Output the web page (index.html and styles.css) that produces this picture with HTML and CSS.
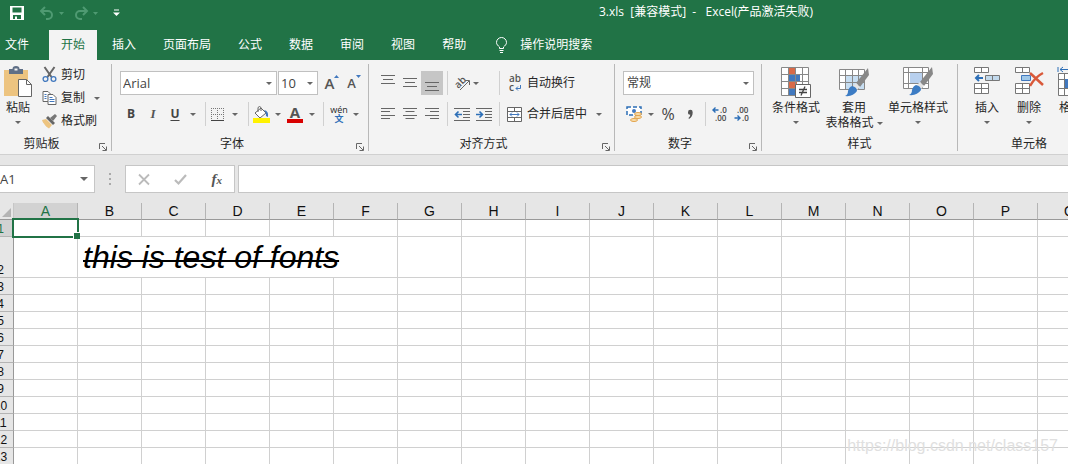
FILE: index.html
```html
<!DOCTYPE html>
<html lang="zh-CN">
<head>
<meta charset="utf-8">
<title>3.xls - Excel</title>
<link rel="stylesheet" href="styles.css">
</head>
<body>
<header class="titlebar">
  <div class="quick">
    <button class="plain save" aria-label="保存"><svg width="14" height="14" viewBox="0 0 14 14"><path d="M0 0h14v14H0z" fill="#fff"/><path d="M2.500 1.500h9v5h-9zM3 9h8v4H3z" fill="#217346"/><path d="M5 10.500h2V14H5z" fill="#fff"/></svg></button>
    <button class="plain dim undo" aria-label="撤消"><svg width="26" height="14" viewBox="0 0 26 14"><path d="M6 1L2 5l4 4M2 5h7a4 4 0 0 1 0 8H7" fill="none" stroke="#4f9a72" stroke-width="2"/><path d="M20 6h5l-2.500 3z" fill="#4f9a72"/></svg></button>
    <button class="plain dim redo" aria-label="恢复"><svg width="26" height="14" viewBox="0 0 26 14"><path d="M10 1l4 4-4 4M14 5H7a4 4 0 0 0 0 8h2" fill="none" stroke="#4f9a72" stroke-width="2"/><path d="M20 6h5l-2.500 3z" fill="#4f9a72"/></svg></button>
    <button class="plain" aria-label="自定义快速访问工具栏"><svg width="7" height="8" viewBox="0 0 7 8"><path d="M1 1h5" stroke="#fff"/><path d="M0 3.500h7L3.500 7z" fill="#fff"/></svg></button>
  </div>
  <h1 class="title">3.xls&nbsp; [兼容模式]&nbsp; -&nbsp;&nbsp; Excel(产品激活失败)</h1>
</header>

<nav class="tabs">
  <button class="tab file">文件</button>
  <button class="tab active">开始</button>
  <button class="tab">插入</button>
  <button class="tab">页面布局</button>
  <button class="tab">公式</button>
  <button class="tab">数据</button>
  <button class="tab">审阅</button>
  <button class="tab">视图</button>
  <button class="tab">帮助</button>
  <button class="tab tell"><svg width="13" height="17" viewBox="0 0 13 17" fill="none" stroke="#fff"><path d="M4.500 11.500V10C3 8.600 1.500 7.500 1.500 5.500a5 5 0 0 1 10 0C11.500 7.500 10 8.600 8.500 10v1.500zM4.500 13.500h4M5 15.500h3"/></svg>操作说明搜索</button>
</nav>

<main class="ribbon">
  <section class="group g-clip">
    <div class="body">
      <button class="big paste"><svg width="28" height="31" viewBox="0 0 28 31"><path d="M0 3h24v26H0z" fill="#edc480"/><path d="M5 2h3.500a3.500 3 0 0 1 7 0H19v5H5z" fill="#5f6f86"/><path d="M10.500 1.500h3v2h-3z" fill="#f3f3f3"/><path d="M14.500 12.500h8l5 5v12h-13z" fill="#fff" stroke="#666"/><path d="M22.500 12.500v5h5" fill="none" stroke="#666"/></svg><span>粘贴</span><i class="arrow"></i></button>
      <div class="stack">
        <button class="line"><svg width="14" height="16" viewBox="0 0 14 16" fill="none"><path d="M2 0l7 10M12 0L5 10" stroke="#666" stroke-width="2"/><circle cx="3" cy="12" r="2.400" stroke="#4178be" stroke-width="1.300"/><circle cx="11" cy="12" r="2.400" stroke="#4178be" stroke-width="1.300"/></svg>剪切</button>
        <button class="line"><svg width="14" height="14" viewBox="0 0 14 14"><path d="M.5.5h5l3 3v7h-8z" fill="#fff" stroke="#666"/><path d="M5.500 3.500h5l3 3v7h-8z" fill="#fff" stroke="#666"/><path d="M2 3.500h2M2 5.500h2M2 7.500h2M7 8.500h5M7 10.500h5M7 6.500h3" stroke="#4178be"/></svg>复制<i class="arrow far"></i></button>
        <button class="line"><svg width="15" height="15" viewBox="0 0 15 15"><path d="M0 6l4-1 6 6-3 3.500C4 13 1 9 0 6z" fill="#edc480"/><path d="M4 4l2-2 7 7-2 2z" fill="#666"/><path d="M8 4l5-4 2 2-4 5z" fill="#777"/></svg>格式刷</button>
      </div>
    </div>
    <footer class="caption"><span>剪贴板</span><button class="launch" aria-label="剪贴板设置"><svg width="8" height="8" viewBox="0 0 8 8"><path d="M.5 6V.5H6M3 3l4 4M7.500 3.500v4h-4" fill="none" stroke="#666"/></svg></button></footer>
  </section>

  <section class="group g-font">
    <div class="rows">
      <div class="row">
        <label class="combo fontname"><select aria-label="字体"><option>Arial</option></select><i class="arrow"></i></label>
        <label class="combo fontsize"><select aria-label="字号"><option>10</option></select><i class="arrow"></i></label>
        <button class="tool w22 grow" aria-label="增大字号"><b>A</b><svg width="5" height="3" viewBox="0 0 5 3"><path d="M0 3h5L2.500 0z" fill="#4178be"/></svg></button>
        <button class="tool w22 grow small" aria-label="减小字号"><b>A</b><svg width="5" height="3" viewBox="0 0 5 3"><path d="M0 0h5L2.500 3z" fill="#4178be"/></svg></button>
      </div>
      <div class="row">
        <button class="tool w22 bold">B</button>
        <button class="tool w22 ital">I</button>
        <button class="tool w22 under">U</button>
        <button class="tool w14" aria-label="下划线选项"><i class="arrow"></i></button>
        <i class="sep s10"></i>
        <button class="tool w14" aria-label="边框"><svg width="13" height="13" viewBox="0 0 13 13"><path d="M.5 0v12M6.500 0v12M12.500 0v12M0 .5h13M0 6.500h13" stroke="#777" stroke-dasharray="1 1"/><path d="M0 12.500h13" stroke="#444"/></svg></button>
        <button class="tool w22" aria-label="边框选项"><i class="arrow"></i></button>
        <i class="sep s4"></i>
        <button class="tool w22" aria-label="填充颜色"><svg width="17" height="17" viewBox="0 0 17 17"><path d="M2 7l6-5 5 5-6 5z" fill="#fff" stroke="#666"/><path d="M5 6V1.500q1.500-2 3 0V5" fill="none" stroke="#666"/><path d="M11 4q5 1 4 7l-2-1q0-4-2-6z" fill="#4178be"/><path d="M0 12h17v5H0z" fill="#fff200"/></svg></button>
        <button class="tool w12" aria-label="填充颜色选项"><i class="arrow"></i></button>
        <button class="tool w22 fontcolor" aria-label="字体颜色"><b>A</b></button>
        <button class="tool w12" aria-label="字体颜色选项"><i class="arrow"></i></button>
        <i class="sep s10"></i>
        <button class="tool w22 pinyin" aria-label="拼音"><span>wén</span><b>文</b></button>
        <button class="tool w12" aria-label="拼音选项"><i class="arrow"></i></button>
      </div>
    </div>
    <footer class="caption"><span>字体</span><button class="launch" aria-label="字体设置"><svg width="8" height="8" viewBox="0 0 8 8"><path d="M.5 6V.5H6M3 3l4 4M7.500 3.500v4h-4" fill="none" stroke="#666"/></svg></button></footer>
  </section>

  <section class="group g-align">
    <div class="rows">
      <div class="row">
        <button class="tool w22" aria-label="顶端对齐"><svg width="14" height="16" viewBox="0 0 14 16"><path d="M0 .5h14M2 4.500h10M0 8.500h14" stroke="#666"/></svg></button>
        <button class="tool w22" aria-label="垂直居中"><svg width="14" height="16" viewBox="0 0 14 16"><path d="M0 3.500h14M2 7.500h10M0 11.500h14" stroke="#666"/></svg></button>
        <button class="tool w22 on" aria-label="底端对齐"><svg width="14" height="16" viewBox="0 0 14 16"><path d="M0 7.500h14M2 11.500h10M0 15.500h14" stroke="#666"/></svg></button>
        <i class="sep s8"></i>
        <button class="tool w22" aria-label="方向"><svg width="17" height="16" viewBox="0 0 17 16"><text x="1" y="12" class="glyph" transform="rotate(-45 5 9)">ab</text><path d="M6 15l9-9M11 5.500h4.500V10" fill="none" stroke="#666"/></svg></button>
        <button class="tool w22 start" aria-label="方向选项"><i class="arrow"></i></button>
        <i class="sep s8"></i>
        <button class="line"><svg width="16" height="18" viewBox="0 0 16 18"><text x="2" y="8" class="glyph">ab</text><text x="2" y="17" class="glyph">c</text><path d="M13.500 11v3.500H9M11 12.500l-2 2 2 2" fill="none" stroke="#4178be"/></svg>自动换行</button>
      </div>
      <div class="row">
        <button class="tool w22" aria-label="左对齐"><svg width="14" height="12" viewBox="0 0 14 12"><path d="M0 .5h14M0 3.500h9M0 7.500h14M0 10.500h9" stroke="#666"/></svg></button>
        <button class="tool w22" aria-label="居中"><svg width="14" height="12" viewBox="0 0 14 12"><path d="M0 .5h14M2.500 3.500h9M0 7.500h14M2.500 10.500h9" stroke="#666"/></svg></button>
        <button class="tool w22" aria-label="右对齐"><svg width="14" height="12" viewBox="0 0 14 12"><path d="M0 .5h14M5 3.500h9M0 7.500h14M5 10.500h9" stroke="#666"/></svg></button>
        <i class="sep s8"></i>
        <button class="tool w22" aria-label="减少缩进量"><svg width="16" height="13" viewBox="0 0 16 13"><path d="M0 .5h16M9 3.500h7M9 6.500h7M9 9.500h7M0 12.500h16" stroke="#666"/><path d="M1 6.500h7M4.500 3.500L1.500 6.500l3 3" fill="none" stroke="#2d6fb7" stroke-width="1.600"/></svg></button>
        <button class="tool w22" aria-label="增加缩进量"><svg width="16" height="13" viewBox="0 0 16 13"><path d="M0 .5h16M9 3.500h7M9 6.500h7M9 9.500h7M0 12.500h16" stroke="#666"/><path d="M0 6.500h7M3.500 3.500l3 3-3 3" fill="none" stroke="#2d6fb7" stroke-width="1.600"/></svg></button>
        <i class="sep s8"></i>
        <button class="line"><svg width="16" height="15" viewBox="0 0 16 15"><path d="M.5.5h14v14H.5zM.5 4.500h14M.5 10.500h14M7.500 0v4M7.500 11v4" fill="#fff" stroke="#666"/><path d="M3 7.500h9M5 5.500l-2 2 2 2M10 5.500l2 2-2 2" fill="none" stroke="#4178be"/></svg>合并后居中<i class="arrow far"></i></button>
      </div>
    </div>
    <footer class="caption"><span>对齐方式</span><button class="launch" aria-label="对齐设置"><svg width="8" height="8" viewBox="0 0 8 8"><path d="M.5 6V.5H6M3 3l4 4M7.500 3.500v4h-4" fill="none" stroke="#666"/></svg></button></footer>
  </section>

  <section class="group g-num">
    <div class="rows">
      <div class="row"><label class="combo numfmt"><select aria-label="数字格式"><option>常规</option></select><i class="arrow"></i></label></div>
      <div class="row">
        <button class="tool w22" aria-label="会计数字格式"><svg width="17" height="16" viewBox="0 0 17 16"><path d="M1 1h14v8H1z" fill="#fff" stroke="#2d6fb7" stroke-width="1.500" stroke-dasharray="4 2"/><circle cx="8" cy="5" r="2" fill="#4178be"/><g fill="#f8dfb0" stroke="#e3a34b"><ellipse cx="12" cy="8" rx="3.500" ry="1.500"/><ellipse cx="12" cy="11" rx="3.500" ry="1.500"/><ellipse cx="8" cy="14" rx="3.500" ry="1.500"/></g></svg></button>
        <button class="tool w12" aria-label="会计格式选项"><i class="arrow"></i></button>
        <button class="tool w22 percent">%</button>
        <button class="tool w22 comma" aria-label="千位分隔样式"><svg width="5" height="9" viewBox="0 0 5 9"><path d="M0 2.200a2.300 2.300 0 0 1 4.700 0C4.700 5.500 3.500 7.500 1 9L.5 8q1.700-1.500 1.800-3.300A2.300 2.300 0 0 1 0 2.200z" fill="#555"/></svg></button>
        <i class="sep s8"></i>
        <button class="tool w22" aria-label="增加小数位数"><svg width="16" height="16" viewBox="0 0 16 16"><text x="8" y="7" class="digit">.0</text><text x="3" y="15" class="digit">.00</text><path d="M.5 4h6M3.500 1.500L1 4l2.500 2.500" fill="none" stroke="#2d6fb7" stroke-width="1.400"/></svg></button>
        <button class="tool w22" aria-label="减少小数位数"><svg width="16" height="16" viewBox="0 0 16 16"><text x="3" y="7" class="digit">.00</text><text x="8" y="15" class="digit">.0</text><path d="M.5 12h6M3.500 9.500L6 12l-2.500 2.500" fill="none" stroke="#2d6fb7" stroke-width="1.400"/></svg></button>
      </div>
    </div>
    <footer class="caption"><span>数字</span><button class="launch" aria-label="数字设置"><svg width="8" height="8" viewBox="0 0 8 8"><path d="M.5 6V.5H6M3 3l4 4M7.500 3.500v4h-4" fill="none" stroke="#666"/></svg></button></footer>
  </section>

  <section class="group g-style">
    <div class="body">
      <button class="big w60"><svg width="30" height="31" viewBox="0 0 30 31"><path d="M.5.500h27v28H.5z" fill="#fff"/><path d="M8 1h6v6H8zM8 14h8v7H8z" fill="#d86a48"/><path d="M8 7h11v7H8zM8 21h6v7H8z" fill="#4178be"/><path d="M.5.500h27v28H.5zM7.500 0v28M14.500 0v28M21.500 0v28M0 7.500h28M0 14.500h28M0 21.500h28" fill="none" stroke="#888"/><path d="M14.500 17.500h15v13h-15z" fill="#fff" stroke="#666"/><path d="M18 22.500h8M18 25.500h8M24 19.500l-4 9" stroke="#444" stroke-width="1.300"/></svg><span>条件格式</span><i class="arrow"></i></button>
      <button class="big w56"><svg width="30" height="31" viewBox="0 0 30 31"><path d="M.5 2.500h25v20H.5z" fill="#fff"/><path d="M7 9h18v14H7z" fill="#c7def2"/><path d="M.5 2.500h25v20H.5zM6.500 3v20M13.500 3v20M19.500 3v20M0 8.500h26M0 15.500h26" fill="none" stroke="#888"/><path d="M29 1l1 7-9 12-4-4z" fill="#888"/><path d="M17 16l4 4-3 3-4-4z" fill="#e4e4e4"/><path d="M13 19q5 1 5 5-4 6-12 5 3-1 3-5 1-4 4-5z" fill="#3c7cc4"/></svg><span>套用</span><span class="second">表格格式<i class="arrow"></i></span></button>
      <button class="big w72"><svg width="30" height="31" viewBox="0 0 30 31"><path d="M.5.500h25v21H.5z" fill="#fff" stroke="#888"/><path d="M7 6h12v10H7z" fill="#b8d0ee"/><path d="M5.500 1v20M19.500 1v20M0 5.500h26M0 16.500h26" stroke="#888"/><path d="M29 0l1 7-9 12-4-4z" fill="#888"/><path d="M17 15l4 4-3 3-4-4z" fill="#e4e4e4"/><path d="M13 18q5 1 5 5-4 6-12 5 3-1 3-5 1-4 4-5z" fill="#3c7cc4"/></svg><span>单元格样式</span><i class="arrow"></i></button>
    </div>
    <footer class="caption"><span>样式</span></footer>
  </section>

  <section class="group g-cell">
    <div class="body">
      <button class="big w42"><svg width="28" height="31" viewBox="0 0 28 31"><path d="M1.500.500h14v5h-14zM8.500.500v5M1.500 16.500h14v10h-14zM8.500 16.500v10M1.500 21.500h14" fill="#fff" stroke="#777"/><path d="M12.500 8.500h14v5h-14zM19.500 8.500v5" fill="#c2d9ec" stroke="#777"/><path d="M3 11h7M6 8l-3 3 3 3" fill="none" stroke="#2d6fb7" stroke-width="2"/></svg><span>插入</span><i class="arrow"></i></button>
      <button class="big w42"><svg width="30" height="31" viewBox="0 0 30 31"><path d="M1.500.500h14v5h-14zM8.500.500v5M1.500 16.500h14v10h-14zM8.500 16.500v10M1.500 21.500h14" fill="#fff" stroke="#777"/><path d="M7.500 8.500h9v5h-9z" fill="#9fc7e8" stroke="#4178be"/><path d="M16 6l13 12M29 6q-8 4-13 13" fill="none" stroke="#d9593a" stroke-width="2.500"/></svg><span>删除</span><i class="arrow"></i></button>
      <button class="big w42"><svg width="28" height="31" viewBox="0 0 28 31"><path d="M1.500 6.500h25v22h-25zM7.500 6v22M19.500 6v22M1 12.500h26M1 21.500h26" fill="#fff" stroke="#777"/><path d="M8 12h12v9H8z" fill="#4178be"/><path d="M1 0v5M27 0v5M3 2.500h22M6 0L3 2.500 6 5M22 0l3 2.500L22 5" fill="none" stroke="#2d6fb7"/></svg><span>格式</span><i class="arrow"></i></button>
    </div>
    <footer class="caption"><span>单元格</span></footer>
  </section>
</main>

<div class="formula">
  <label class="namebox"><input aria-label="名称框" value="A1"><i class="arrow"></i></label>
  <svg class="dots" width="2" height="12" viewBox="0 0 2 12"><path d="M0 0h2v2H0zM0 5h2v2H0zM0 10h2v2H0z" fill="#aaa"/></svg>
  <div class="actions">
    <button class="plain" aria-label="取消"><svg width="12" height="11" viewBox="0 0 12 11"><path d="M1 .5l10 10M11 .5l-10 10" stroke="#bbb" stroke-width="1.800"/></svg></button>
    <button class="plain" aria-label="输入"><svg width="13" height="11" viewBox="0 0 13 11"><path d="M1 6l3.500 3.500L12 1" fill="none" stroke="#bbb" stroke-width="2.200"/></svg></button>
    <button class="plain fx" aria-label="插入函数">f<sub>x</sub></button>
  </div>
  <input class="entry" aria-label="编辑栏">
</div>

<div class="sheet">
  <table class="grid">
    <thead><tr id="letters"><th class="corner"><svg width="9" height="9" viewBox="0 0 9 9"><path d="M9 0v9H0z" fill="#b4b4b4"/></svg></th></tr></thead>
    <tbody id="cells"></tbody>
  </table>
  <p class="mark">https://blog.csdn.net/class157</p>
</div>
<script src="grid.js"></script>
</body>
</html>
```

FILE: styles.css
```css
* { box-sizing: border-box; }
body {
  margin: 0;
  height: 100vh;
  display: flex;
  flex-direction: column;
  overflow: hidden;
  background: #e6e6e6;
  color: #262626;
  font: 12px/16px "Open Sans", "Noto Sans CJK SC", sans-serif;
}
button, input, select { font: inherit; color: inherit; margin: 0; }
button { border: 0; padding: 0; background: none; white-space: nowrap; }
svg { display: block; flex: none; overflow: visible; }

.titlebar { display: flex; align-items: center; height: 30px; flex: none; background: #217346; color: #fff; padding-bottom: 6px; }
.quick { display: flex; align-items: center; padding: 2px 0 0 10px; }
.save { margin-right: 15px; }
.undo { margin-right: 8px; }
.redo { margin-right: 14px; }
.title { flex: 1; margin: 0; padding-left: 224px; text-align: center; font-size: 12px; font-weight: 400; white-space: nowrap; }

.tabs { display: flex; gap: 3px; height: 30px; flex: none; background: #217346; color: #fff; }
.tab { padding: 0 12px; height: 30px; }
.tab.file { padding: 0 17px 0 5px; }
.tab.active { background: #f3f3f3; color: #217346; }
.tab.tell { display: flex; align-items: center; gap: 12px; padding-left: 14px; }

.ribbon { display: flex; flex: none; height: 95px; padding: 4px 0 3px; background: #f3f3f3; border-bottom: 1px solid #d0d0d0; overflow: hidden; }
.group { display: flex; flex-direction: column; justify-content: space-between; flex: none; border-right: 1px solid #b8b8b8; }
.g-clip { width: 112px; }
.g-font { width: 257px; }
.g-align { width: 246px; }
.g-num { width: 147px; }
.g-style { width: 196px; }
.g-cell { width: 142px; border: 0; }
.caption { display: flex; align-items: center; height: 14px; padding-right: 4px; }
.caption span { flex: 1; text-align: center; padding-right: 4px; }
.caption span:last-child { padding: 0 0 0 4px; }
.g-clip .caption span { padding-right: 16px; }
.launch { padding-top: 5px; }
.arrow { display: block; flex: none; width: 0; height: 0; border: 3px solid transparent; border-top-color: #666; border-bottom: 0; }

.body { display: flex; }
.g-style .body { padding-left: 4px; }
.g-cell .body { padding-left: 8px; }
.big { display: flex; flex-direction: column; align-items: center; padding-top: 3px; }
.big svg { margin-bottom: 2px; }
.big > .arrow { margin-top: 5px; }
.paste { width: 38px; padding-right: 2px; }
.second { display: flex; align-items: center; gap: 3px; margin-top: -1px; }
.w42 { width: 42px; }
.w56 { width: 56px; }
.w60 { width: 60px; }
.w72 { width: 72px; }

.stack { display: flex; flex-direction: column; padding: 1px 0 0 4px; gap: 3px; }
.line { display: flex; align-items: center; gap: 4px; height: 20px; }
.stack .line svg { width: 15px; }
.row .line { margin-left: 4px; }
.line .far { margin-left: 5px; }

.rows { display: flex; flex-direction: column; gap: 7px; padding: 7px 0 0 8px; }
.row { display: flex; align-items: center; height: 24px; }
.tool { display: flex; align-items: center; justify-content: center; height: 24px; flex: none; }
.start { justify-content: flex-start; }
.w12 { width: 12px; }
.w14 { width: 14px; }
.w22 { width: 22px; }
.on { background: #c6c6c6; }
.sep { display: flex; justify-content: center; height: 24px; flex: none; }
.sep::before { content: ""; border-left: 1px solid #d0d0d0; }
.s4 { width: 4px; }
.s8 { width: 8px; }
.s10 { width: 10px; }
.combo { display: flex; align-items: center; position: relative; height: 24px; border: 1px solid #c0c0c0; background: #fff; }
.combo select { appearance: none; border: 0; background: none; width: 100%; height: 22px; padding: 0 2px; color: #444; outline: 0; font-size: 13px; }
.combo.numfmt select { font-size: 12px; padding: 0 3px; }
.combo .arrow { position: absolute; right: 4px; pointer-events: none; }
.fontname { width: 157px; }
.fontsize { width: 40px; margin: 0 3px 0 1px; }
.numfmt { width: 131px; }
.grow { color: #555; font-size: 15px; }
.grow svg { align-self: flex-start; margin-top: 4px; }
.grow.small { font-size: 13px; }
.grow b { font-weight: 600; }
.bold { font-weight: 700; color: #444; }
.ital { font: italic 700 13px "Liberation Serif", serif; color: #555; }
.under { font-weight: 700; color: #444; text-decoration: underline; text-underline-offset: 2px; }
.fontcolor b { width: 16px; line-height: 13px; font-size: 15px; color: #555; border-bottom: 4px solid #d80000; }
.pinyin { flex-direction: column; font-size: 9px; line-height: 9px; }
.pinyin b { color: #2d6fb7; line-height: 10px; }
.glyph { font: 600 10px "Open Sans", sans-serif; fill: #555; }
.digit { font: 600 8px "Open Sans", sans-serif; fill: #444; }
.percent { font-size: 16px; color: #444; }

.formula { display: flex; align-items: center; flex: none; height: 48px; padding: 1px 0; color: #444; }
.namebox, .actions, .entry { height: 28px; border: 1px solid #c6c6c6; background: #fff; }
.namebox { display: flex; align-items: center; width: 95px; border-left: 0; padding-right: 6px; }
.namebox input { flex: 1; min-width: 0; border: 0; padding: 0; outline: 0; font-size: 13px; }
.namebox .arrow { border-width: 4px 4px 0; }
.dots { margin: 0 14px; }
.actions { display: flex; align-items: center; justify-content: space-between; width: 110px; padding: 0 12px; }
.fx { font: italic 700 15px "Liberation Serif", serif; color: #555; }
.fx sub { font-size: 11px; vertical-align: baseline; }
.entry { flex: 1; min-width: 0; margin-left: 3px; border-right: 0; outline: 0; }

.sheet { position: relative; flex: 1; overflow: hidden; background: #fff; }
.grid { width: 1114px; margin-left: -12px; table-layout: fixed; border-collapse: separate; border-spacing: 0; font: 12px/14px "Liberation Sans", Arial, sans-serif; color: #111; }
.grid th, .grid td { padding: 0; height: 17px; border-right: 1px solid #d0d0d0; border-bottom: 1px solid #d0d0d0; font-weight: 400; }
.grid th { background: #e6e6e6; border-color: #b4b4b4; }
.grid thead th { width: 64px; border-bottom-color: #999; font-size: 14px; }
.grid thead .corner { width: 26px; border-right-color: #c6c6c6; }
.corner svg { margin: 3px 0 0 14px; }
.grid tbody th { border-right-color: #999; vertical-align: bottom; }
.grid th.picked { background: #d2d2d2; color: #217346; }
.grid tr.tall > * { height: 41px; }
.grid .current { position: relative; }
.current::before { content: ""; position: absolute; inset: -2px; border: 2px solid #217346; }
.current::after { content: ""; position: absolute; right: -3px; bottom: -3px; width: 6px; height: 6px; background: #217346; border: solid #fff; border-width: 1px 0 0 1px; }
.grid .sample { padding-left: 5px; font: italic 32px/36px "Liberation Sans", Arial, sans-serif; color: #000; text-decoration: underline 2px; text-underline-offset: -8px; text-decoration-skip-ink: none; white-space: nowrap; }
.mark { position: absolute; right: 10px; bottom: 9px; margin: 0; font: 16px/18px "Liberation Sans", Arial, sans-serif; color: #e0e0e0; }
```

FILE: grid.js
```js
const letters = document.getElementById("letters");
const cells = document.getElementById("cells");
const names = "ABCDEFGHIJKLMNOPQ";

for (const name of names) {
  const th = document.createElement("th");
  th.textContent = name;
  if (name === "A") th.className = "picked";
  letters.append(th);
}

for (let r = 1; r <= 14; r++) {
  const tr = document.createElement("tr");
  const th = document.createElement("th");
  th.textContent = r;
  if (r === 1) th.className = "picked";
  tr.append(th);
  for (let c = 0; c < names.length; c++) {
    const td = document.createElement("td");
    if (r === 1 && c === 0) td.className = "current";
    if (r === 2 && c === 1) {
      // The long text runs over the empty cells to its right.
      td.className = "sample";
      td.colSpan = 5;
      td.textContent = "this is test of fonts";
      c += 4;
    }
    tr.append(td);
  }
  if (r === 2) tr.className = "tall";
  cells.append(tr);
}
```
